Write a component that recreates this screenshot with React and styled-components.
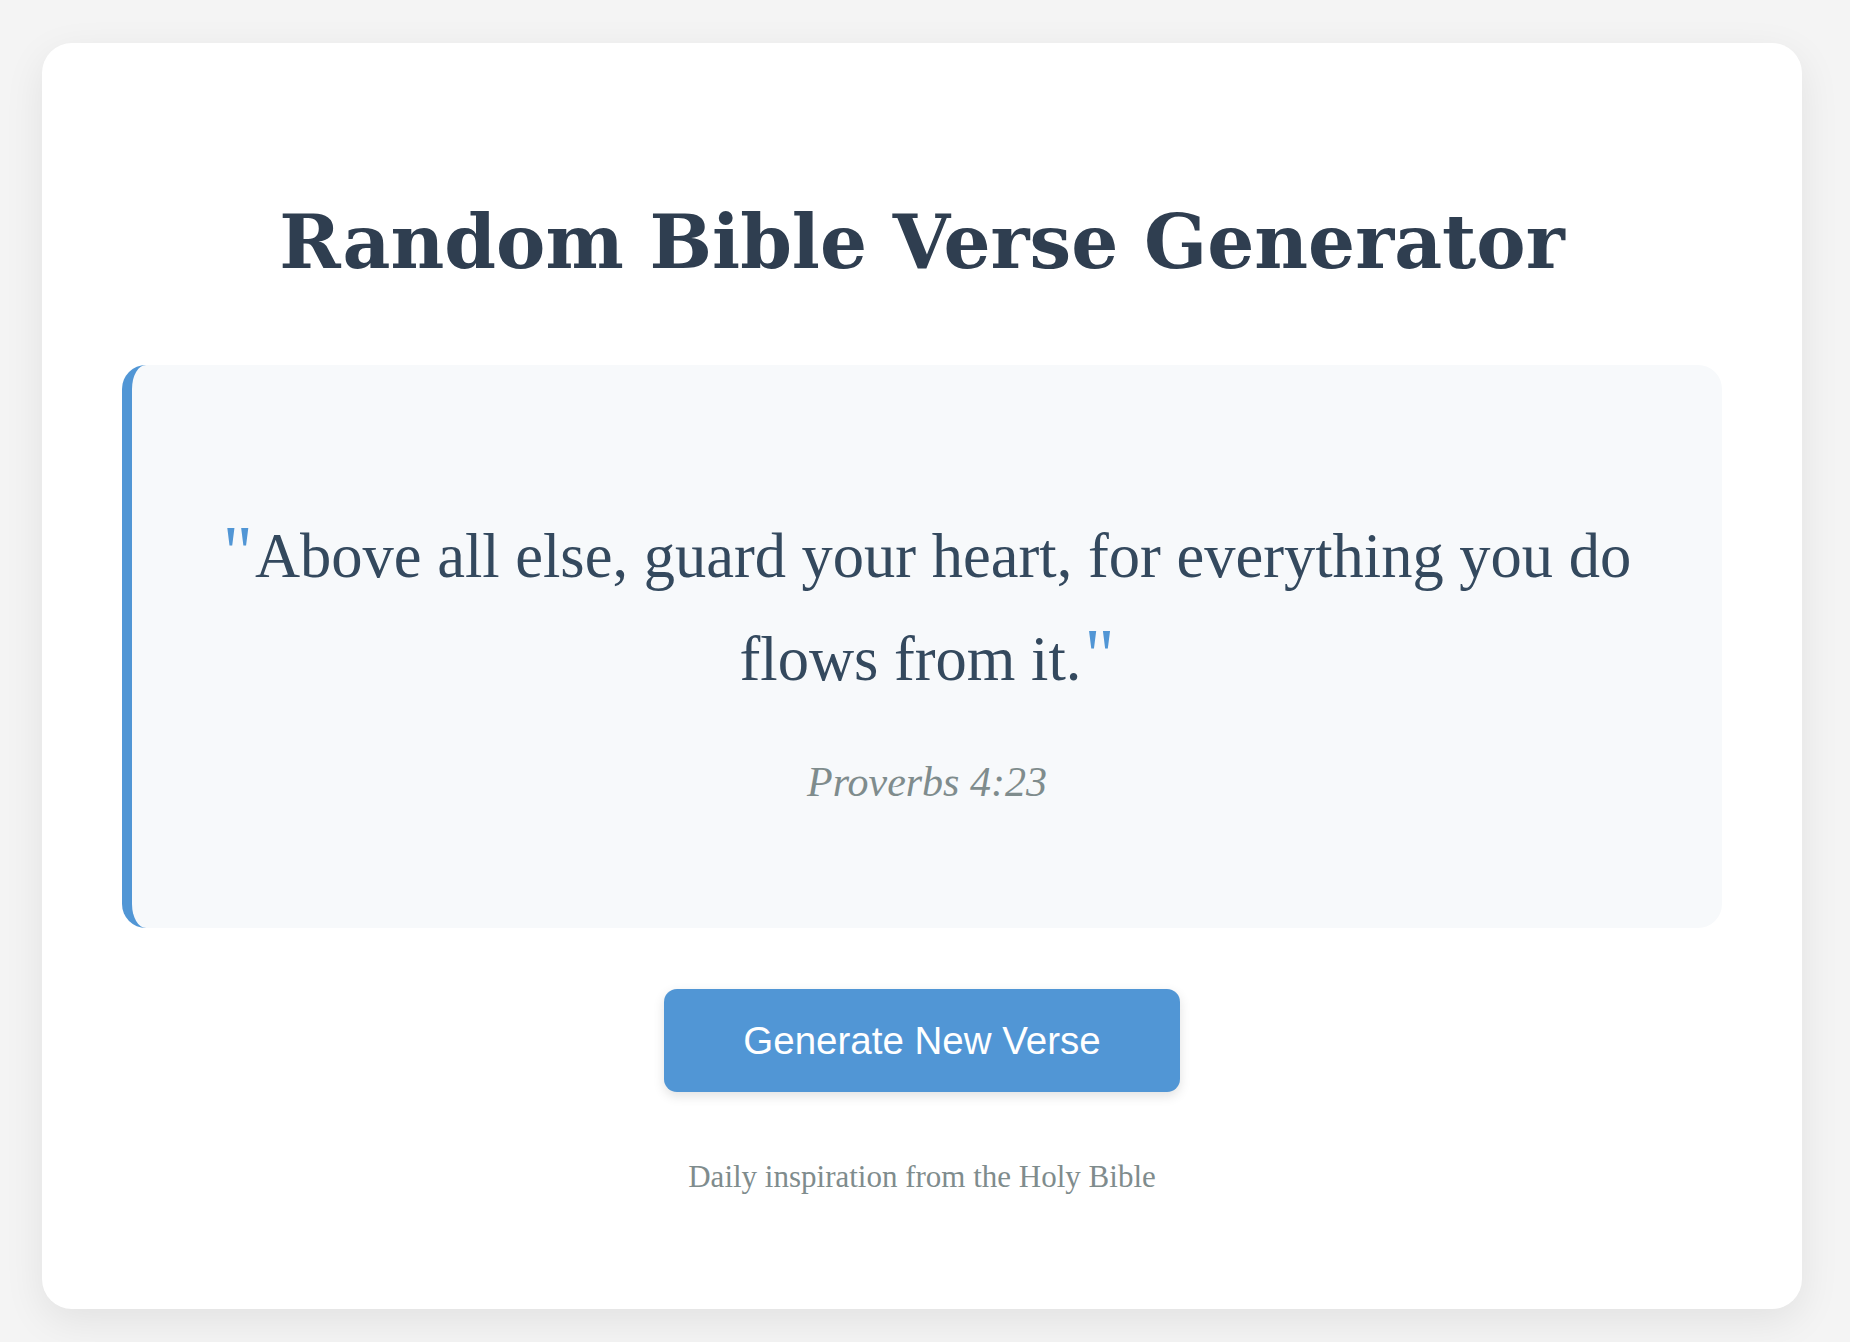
import React from "react";
import styled, { createGlobalStyle } from "styled-components";

const GlobalStyle = createGlobalStyle`
  html, body {
    margin: 0;
    padding: 0;
    background: #f4f4f4;
  }
  body {
    font-family: "Liberation Serif", serif;
  }
`;

const Page = styled.div`
  box-sizing: border-box;
  width: 1850px;
  min-height: 1342px;
  padding: 43px 48px 33px 42px;
  display: flex;
  flex-direction: column;
`;

const Card = styled.main`
  box-sizing: border-box;
  flex: 1;
  background: #ffffff;
  border-radius: 30px;
  box-shadow: 0 12px 40px rgba(0, 0, 0, 0.08);
  padding: 155px 80px 0;
  display: flex;
  flex-direction: column;
  align-items: stretch;
`;

const Title = styled.h1`
  margin: 0 0 78px;
  text-align: center;
  font-family: "DejaVu Serif", "Liberation Serif", serif;
  font-weight: 700;
  font-size: 74px;
  line-height: 1.2;
  color: #2f3e50;
`;

const VerseBox = styled.section`
  box-sizing: border-box;
  background: #f7f9fb;
  border-left: 10px solid #5196d5;
  border-radius: 24px;
  padding: 140px 70px 121px;
  text-align: center;
`;

const VerseText = styled.p`
  margin: 0;
  font-family: "Liberation Serif", serif;
  font-size: 62.5px;
  line-height: 103px;
  color: #34495e;
`;

const Quote = styled.span`
  color: #5196d5;
  font-size: 1.18em;
  line-height: 1;
  margin: ${(p) => (p.$closing ? "0 0 0 3px" : "0 2px 0 0")};
`;

const Reference = styled.p`
  margin: 46px 0 0;
  font-family: "Liberation Serif", serif;
  font-style: italic;
  font-size: 42px;
  line-height: 1.2;
  color: #7f8c8d;
`;

const Actions = styled.div`
  display: flex;
  justify-content: center;
  margin-top: 61px;
`;

const Button = styled.button`
  width: 516px;
  height: 103px;
  border: none;
  border-radius: 13px;
  background: #5196d5;
  color: #ffffff;
  font-family: "Liberation Sans", Arial, sans-serif;
  font-size: 38.5px;
  box-shadow: 0 4px 12px rgba(0, 0, 0, 0.12);
  cursor: pointer;
`;

const Footer = styled.p`
  margin: 66px 0 0;
  text-align: center;
  font-family: "Liberation Serif", serif;
  font-size: 31px;
  line-height: 1.2;
  color: #7f8c8d;
`;

export default function App() {
  return (
    <>
      <GlobalStyle />
      <Page>
        <Card>
          <Title>Random Bible Verse Generator</Title>
          <VerseBox>
            <VerseText>
              <Quote>"</Quote>Above all else, guard your heart, for everything you do
              flows from it.<Quote $closing>"</Quote>
            </VerseText>
            <Reference>Proverbs 4:23</Reference>
          </VerseBox>
          <Actions>
            <Button>Generate New Verse</Button>
          </Actions>
          <Footer>Daily inspiration from the Holy Bible</Footer>
        </Card>
      </Page>
    </>
  );
}
